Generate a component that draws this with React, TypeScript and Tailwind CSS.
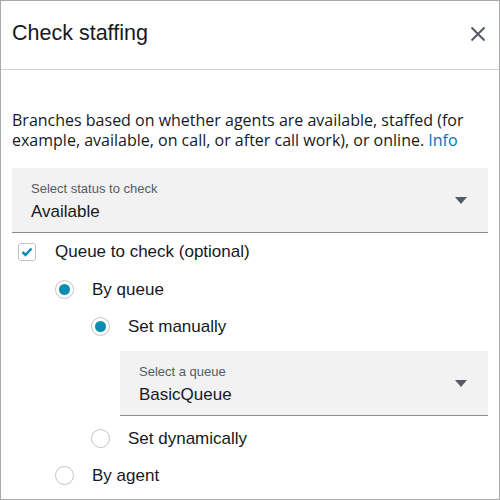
import React from 'react';

const arial = { fontFamily: '"Liberation Sans", Arial, sans-serif' };

function Caret() {
  return (
    <svg width="12" height="7" viewBox="0 0 12 7" className="shrink-0">
      <path d="M0 0 H12 L6 7 Z" fill="#545b64" />
    </svg>
  );
}

function SelectBox({ label, value, className = '' }: { label: string; value: string; className?: string }) {
  return (
    <div className={`h-[65px] bg-[#f2f2f2] border-b border-[#8d8d8d] flex items-center justify-between pl-[19px] pr-[21px] ${className}`}>
      <div className="flex flex-col self-start pt-[13px]">
        <span className="text-[13px] leading-[15px] text-[#545b64]">{label}</span>
        <span className="text-[17px] leading-[20px] text-[#16191f] mt-[6px]">{value}</span>
      </div>
      <Caret />
    </div>
  );
}

function Radio({ checked, label, indent, h = 'h-[37px]' }: { checked: boolean; label: string; indent: string; h?: string }) {
  return (
    <div className={`${h} flex items-center ${indent}`}>
      <span className="w-[19px] h-[19px] rounded-full border border-[#c4c4c4] bg-white flex items-center justify-center shrink-0">
        {checked && <span className="w-[11px] h-[11px] rounded-full bg-[#0a8cb3]" />}
      </span>
      <span className="ml-[18px] text-[17px] text-[#16191f]">{label}</span>
    </div>
  );
}

export default function App() {
  return (
    <div className="w-[500px] h-[500px] bg-white border border-[#a9a9a9] overflow-hidden" style={arial}>
      {/* Header */}
      <div className="h-[69px] border-b border-[#cfcfcf] flex items-center justify-between pl-[11px] pr-[13px] pb-[3px]">
        <h1 className="text-[21.5px] text-[#16191f]">Check staffing</h1>
        <svg width="16" height="16" viewBox="0 0 16 16">
          <path d="M1.5 1.5 L14.5 14.5 M14.5 1.5 L1.5 14.5" stroke="#545b64" strokeWidth="2" />
        </svg>
      </div>

      <div className="px-[11px]">
        <p
          className="mt-[40px] text-[16px] leading-[20px] text-[#16191f]"
          style={{ fontFamily: '"Open Sans", "Noto Sans", sans-serif' }}
        >
          Branches based on whether agents are available, staffed (for example, available, on call, or after call work), or online. <span className="text-[#0073bb]">Info</span>
        </p>

        <SelectBox label="Select status to check" value="Available" className="mt-[18px]" />

        <div className="h-[38px] flex items-center pl-[6px]">
          <span className="w-[18px] h-[18px] rounded-[3px] border border-[#c4c4c4] bg-white flex items-center justify-center shrink-0">
            <svg width="12" height="10" viewBox="0 0 12 10">
              <path d="M1.5 5 L4.5 8 L10.5 1.5" stroke="#0a8cb3" strokeWidth="2.5" fill="none" />
            </svg>
          </span>
          <span className="ml-[19px] text-[17px] text-[#16191f]">Queue to check (optional)</span>
        </div>

        <Radio checked label="By queue" indent="pl-[43px]" />
        <Radio checked label="Set manually" indent="pl-[79px]" />
        <SelectBox label="Select a queue" value="BasicQueue" className="ml-[108px] mt-[6px]" />
        <div className="mt-[4px]" />
        <Radio checked={false} label="Set dynamically" indent="pl-[79px]" />
        <Radio checked={false} label="By agent" indent="pl-[43px]" />
      </div>
    </div>
  );
}
